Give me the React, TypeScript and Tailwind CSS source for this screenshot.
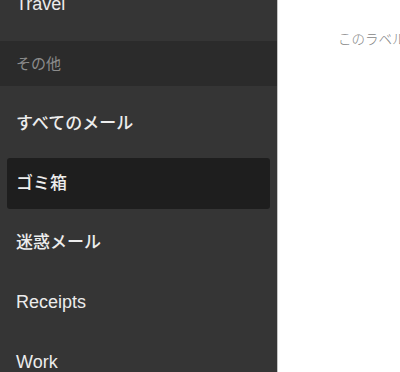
const font = "font-['Liberation_Sans','Noto_Sans_CJK_JP',sans-serif]"

type Item = { label: string; kind: 'item' | 'header' | 'selected'; h: string; latin?: boolean }

const items: Item[] = [
  { label: 'Travel', kind: 'item', h: 'h-[60px]', latin: true },
  { label: 'その他', kind: 'header', h: 'h-[60px]' },
  { label: 'すべてのメール', kind: 'item', h: 'h-[60px]' },
  { label: 'ゴミ箱', kind: 'selected', h: 'h-[59px]' },
  { label: '迷惑メール', kind: 'item', h: 'h-[59px]' },
  { label: 'Receipts', kind: 'item', h: 'h-[60px]', latin: true },
  { label: 'Work', kind: 'item', h: 'h-[60px]', latin: true },
]

function Row({ item }: { item: Item }) {
  const text = item.latin
    ? 'text-[18px] font-normal text-[#ececec]'
    : 'text-[17px] font-medium text-[#ededed]'
  if (item.kind === 'header') {
    return (
      <div className={`${item.h} shrink-0 pt-[7px]`}>
        <div className="h-[45px] bg-[#2b2b2b] flex items-center pl-4 pt-[2px] text-[15px] text-[#8c8c8c]">
          {item.label}
        </div>
      </div>
    )
  }
  if (item.kind === 'selected') {
    return (
      <div className={`${item.h} shrink-0 px-[7px] py-[4px]`}>
        <div className={`h-full rounded-[3px] bg-[#1e1e1e] flex items-center pl-[9px] ${text}`}>
          {item.label}
        </div>
      </div>
    )
  }
  return (
    <div className={`${item.h} shrink-0 flex items-center px-4 ${text}`}>
      {item.label}
    </div>
  )
}

export default function App() {
  return (
    <div className={`w-[400px] h-[372px] flex overflow-hidden ${font}`}>
      <div className="w-[277px] shrink-0 bg-[#353535] flex flex-col -mt-[26px]">
        {items.map((item, i) => (
          <Row key={i} item={item} />
        ))}
      </div>
      <div className="flex-1 bg-white border-l border-[#c4c4c4] overflow-hidden">
        <p className="pl-[60px] pt-[31px] whitespace-nowrap text-[13.5px] leading-[18px] font-light text-[#858585]">
          このラベルにはメールがありません
        </p>
      </div>
    </div>
  )
}
